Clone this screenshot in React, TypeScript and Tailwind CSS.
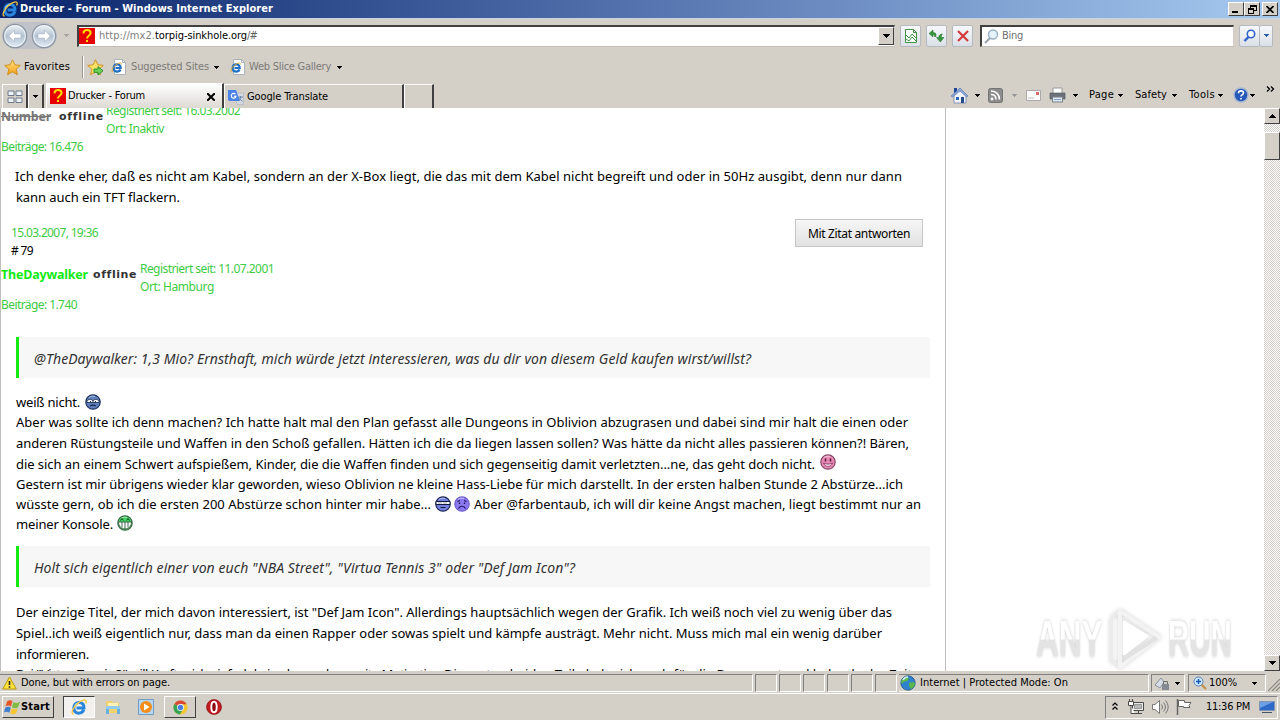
import React, { useLayoutEffect, useRef, useState } from "react";
import { clsx } from "clsx";

interface FitProps {
  w: number;
  children: string;
  className?: string;
}

// Text run that spreads its letters over a fixed width
function Fit({ w, children, className }: FitProps) {
  const ref = useRef<HTMLSpanElement>(null);
  const [spacing, setSpacing] = useState(0);

  useLayoutEffect(() => {
    if (!ref.current) return;
    const natural = ref.current.getBoundingClientRect().width;
    setSpacing((w - natural) / children.length);
  }, []);

  return (
    <span className={clsx("block shrink-0 whitespace-pre", className)} style={{ width: w }}>
      <span ref={ref} style={{ letterSpacing: spacing }}>
        {children}
      </span>
    </span>
  );
}

function Arrow({ className }: { className?: string }) {
  return (
    <svg width="5" height="3" viewBox="0 0 5 3" shapeRendering="crispEdges" className={clsx("shrink-0", className)}>
      <path d="M0 0h5v1H4v1H3v1H2V2H1V1H0z" fill="currentColor" />
    </svg>
  );
}

function IELogo({ size = 16, className }: { size?: number; className?: string }) {
  return (
    <svg width={size} height={size} viewBox="0 0 16 16" fill="none" className={clsx("shrink-0", className)}>
      <path d="M12.800 10.800C12 13 10 14.200 7.800 14.200 4.600 14.200 2.800 12 2.800 9s2-5.600 5.200-5.600c3.400 0 5.200 2.400 5 5.600H5.500" stroke="#2a86dc" strokeWidth="3" />
      <path d="M3.400 8C4.200 5.400 5.800 4 8 3.900" stroke="#a8deff" strokeWidth="1.200" />
      <path d="M2.600 15.200C-.8 14.500 2 8.600 6.500 4.600 10.300 1.200 15.200-.6 15.200 2.400c0 .7-.2 1.300-.5 2" stroke="#f6c63a" strokeWidth="1.300" />
    </svg>
  );
}

function IEPage({ className }: { className?: string }) {
  return (
    <svg width="16" height="16" viewBox="0 0 16 16" fill="none" className={clsx("shrink-0", className)}>
      <path d="M3.500.5h8l3 3v12h-11z" fill="#fff" stroke="#a9b3bd" />
      <path d="M11.500.5v3h3" stroke="#a9b3bd" />
      <path d="M9.500 10.500C8.900 12 7.700 12.600 6.300 12.600 4 12.600 2.700 11 2.700 9s1.300-3.600 3.600-3.600S9.800 7 9.700 9H4.500" stroke="#1f6fc4" strokeWidth="2.200" />
      <path d="M2 13.200C-.5 12.500 2 8 5 5.800c2.700-2 5.800-2.700 5.500-.4" stroke="#e2a81e" strokeWidth=".9" />
    </svg>
  );
}

function Star({ add, className }: { add?: boolean; className?: string }) {
  return (
    <svg width="17" height="17" viewBox="0 0 17 17" className={clsx("shrink-0", className)}>
      <defs>
        <linearGradient id="gold" x1="0" y1="0" x2="0" y2="1">
          <stop offset="0" stopColor="#ffe98a" />
          <stop offset="1" stopColor="#f39a12" />
        </linearGradient>
      </defs>
      <path d="M8.500.8l2.300 5 5.500.6-4.100 3.700 1.200 5.600-4.900-2.900-4.900 2.900L4.800 10.100.7 6.400l5.500-.6z" fill={add ? "#fbe36a" : "url(#gold)"} stroke="#cf8a12" strokeWidth=".9" />
      {add && <path d="M7 10h4V7.500l5 4.300-5 4.200v-2.700H7z" fill="#6fd35b" stroke="#1f8a24" strokeWidth=".9" />}
    </svg>
  );
}

function QuestionIcon({ className }: { className?: string }) {
  return (
    <span className={clsx("flex h-4 w-4 shrink-0 items-center justify-center bg-[#e60000]", className)}>
      <svg width="16" height="16" viewBox="0 0 16 16" fill="none">
        <path d="M4.500 5.500C4.500 3 6 2 8 2s3.600 1 3.600 3C11.600 7.400 8 7.600 8 10.600" stroke="#ffe100" strokeWidth="2" />
        <path d="M7 12h2v2H7z" fill="#ffe100" />
      </svg>
    </span>
  );
}

function NavButton({ flip }: { flip?: boolean }) {
  return (
    <svg width="26" height="26" viewBox="0 0 26 26" fill="none" className={clsx("shrink-0", flip && "-scale-x-100")}>
      <defs>
        <linearGradient id="nav" x1="0" y1="0" x2="0" y2="1">
          <stop offset="0" stopColor="#f2f5f8" />
          <stop offset=".5" stopColor="#b4c3d3" />
          <stop offset="1" stopColor="#e4eef6" />
        </linearGradient>
      </defs>
      <circle cx="13" cy="13" r="11.700" fill="url(#nav)" stroke="#8b95a1" strokeWidth="1.200" />
      <circle cx="13" cy="13" r="10.300" stroke="#eef3f8" />
      <path d="M12.500 7L6.700 13l5.800 6v-3.800H19v-4.400h-6.500z" fill="#fff" stroke="#a3b2c3" strokeWidth=".7" />
    </svg>
  );
}

const raised = "border border-t-white border-l-white border-r-[#404040] border-b-[#404040] bg-[#d4d0c8]";
const sunken = "border border-t-[#808080] border-l-[#808080] border-r-white border-b-white";
const toolButton = "flex h-[22px] items-center justify-center rounded-[2px] border border-[#b5bac0] bg-linear-to-b from-[#f7f8fa] to-[#dbe0e8]";

function TitleBar() {
  return (
    <div className="flex h-[18px] items-center bg-linear-to-r from-[#0a246a] via-[#5573ae] to-[#a6caf0] pr-[2px] pl-[2px]">
      <IELogo size={16} />
      <Fit w={253} className="ml-[2px] text-[11px] leading-[18px] font-bold text-white">
        Drucker - Forum - Windows Internet Explorer
      </Fit>
      <div className="ml-auto flex">
        <span className={clsx(raised, "flex h-[14px] w-4 items-end justify-center pb-[2px]")}>
          <i className="mr-[2px] h-[2px] w-[6px] bg-black" />
        </span>
        <span className={clsx(raised, "flex h-[14px] w-4 items-center justify-center")}>
          <svg width="9" height="9" viewBox="0 0 9 9" fill="none" stroke="#000" shapeRendering="crispEdges">
            <path d="M2.500 3V.5h6v5H6M2 1h7" />
            <path d="M.5 3.500h5v5h-5zM0 4h6" />
          </svg>
        </span>
        <span className={clsx(raised, "ml-[2px] flex h-[14px] w-4 items-center justify-center")}>
          <svg width="8" height="7" viewBox="0 0 8 7" stroke="#000" strokeWidth="1.700">
            <path d="M.5 0l7 7M7.500 0l-7 7" />
          </svg>
        </span>
      </div>
    </div>
  );
}

function AddressRow() {
  return (
    <div className="flex h-[34px] items-center border-t border-[#c6d3e4]">
      <div className="ml-[2px] flex h-[27px] w-[55px] items-center justify-between rounded-full bg-[#bfc3c9]">
        <NavButton />
        <NavButton flip />
      </div>
      <Arrow className="ml-[6px] w-[7px] text-[#a8a49d]" />
      <div className="ml-[7px] flex h-[22px] w-[818px] items-center border-t-2 border-r border-b border-l-2 border-t-[#404040] border-r-[#d4d0c8] border-b-[#c0bdb6] border-l-[#404040] bg-white">
        <QuestionIcon />
        <div className="ml-[4px] flex text-[11px]">
          <Fit w={56} className="text-[#808080]">http://mx2.</Fit>
          <Fit w={92} className="text-black">torpig-sinkhole.org</Fit>
          <Fit w={10} className="text-[#606060]">/#</Fit>
        </div>
        <span className={clsx(raised, "ml-auto flex h-[18px] w-[16px] items-center justify-center")}>
          <svg width="7" height="4" viewBox="0 0 7 4" shapeRendering="crispEdges">
            <path d="M0 0h7v1H6v1H5v1H4v1H3V3H2V2H1V1H0z" />
          </svg>
        </span>
      </div>
      <span className={clsx(toolButton, "ml-[5px] w-[21px]")}>
        <svg width="14" height="14" viewBox="0 0 14 14" fill="none" stroke="#3c9440">
          <path d="M1.500.5h8l3 3v10h-11z" fill="#fff" />
          <path d="M9.500.5v3h3M2 6l3 3 3-4 4 4M2 10l3 2 3-4 4 4" />
        </svg>
      </span>
      <span className={clsx(toolButton, "ml-[5px] w-[21px]")}>
        <svg width="15" height="14" viewBox="0 0 15 14" fill="#36983c" stroke="#1b6d24" strokeWidth=".5">
          <path d="M0 4.500L4 1v2.500c2 0 3 .8 3 2.500v1.500H5.500C5.500 6 5 5.500 4 5.500V8z" />
          <path d="M15 8.500L11.300 13 7.500 8.500h2.300C9.800 6.500 11 5 13.500 5c-1 .8-1.200 2-1.100 3.500z" />
        </svg>
      </span>
      <span className={clsx(toolButton, "ml-[5px] w-[21px]")}>
        <svg width="12" height="12" viewBox="0 0 12 12" stroke="#d43c3c" strokeWidth="2.200">
          <path d="M1 1l10 10M11 1L1 11" />
        </svg>
      </span>
      <div className="ml-[7px] flex h-[22px] w-[254px] items-center border-t-2 border-r border-b border-l-2 border-t-[#404040] border-r-[#d4d0c8] border-b-[#c0bdb6] border-l-[#404040] bg-white pl-[2px]">
        <svg width="15" height="15" viewBox="0 0 15 15" fill="none">
          <path d="M6 9l-5 5" stroke="#9aa5b0" strokeWidth="2.200" />
          <circle cx="9" cy="5.500" r="4.500" fill="#e6f3fc" stroke="#9ab0c4" strokeWidth="1.400" />
        </svg>
        <Fit w={21} className="ml-[3px] pt-[1px] text-[11px] text-[#707070]">Bing</Fit>
      </div>
      <span className={clsx(toolButton, "ml-[5px] w-[21px]")}>
        <svg width="13" height="13" viewBox="0 0 13 13" fill="none">
          <path d="M6 7.500l-4.500 4.500" stroke="#2c62c9" strokeWidth="2.400" />
          <circle cx="8" cy="5" r="3.700" fill="#fff" stroke="#2c62c9" strokeWidth="1.600" />
        </svg>
      </span>
      <span className={clsx(toolButton, "w-[13px] border-l-0")}>
        <Arrow className="text-[#2c5ea8]" />
      </span>
    </div>
  );
}

function FavoritesRow() {
  return (
    <div className="flex h-[30px] items-center text-[11px] text-[#7c7a76]">
      <Star className="ml-[4px]" />
      <Fit w={46} className="ml-[3px] text-black">Favorites</Fit>
      <span className="ml-[12px] h-[22px] w-[2px] border-r border-l border-r-white border-l-[#9a968f]" />
      <Star add className="ml-[3px]" />
      <IEPage className="ml-[7px]" />
      <Fit w={78} className="ml-[4px] pt-[1px]">Suggested Sites</Fit>
      <Arrow className="ml-[5px] text-black" />
      <IEPage className="ml-[11px]" />
      <Fit w={82} className="ml-[3px] pt-[1px]">Web Slice Gallery</Fit>
      <Arrow className="ml-[6px] text-black" />
    </div>
  );
}

const tabEdge = "flex items-center border-t border-r-2 border-l border-t-white border-r-[#404040] border-l-white";

function TabRow() {
  return (
    <div className="flex h-[26px] items-end text-[11px]">
      <div className={clsx(tabEdge, "ml-[2px] h-6 w-[26px] justify-center")}>
        <svg width="16" height="14" viewBox="0 0 16 14" fill="#eef1f5" stroke="#6c7a8c">
          <path d="M1 1h6v4.500H1zM9 1h6v4.500H9zM1 8h6v4.500H1zM9 8h6v4.500H9z" />
        </svg>
      </div>
      <div className={clsx(tabEdge, "h-6 w-4 justify-center")}>
        <Arrow />
      </div>
      <div className={clsx(tabEdge, "ml-[2px] h-[25px] w-[178px] bg-linear-to-b from-white to-[#dedad4] pl-[3px]")}>
        <QuestionIcon />
        <Fit w={77} className="ml-[2px] pt-[1px]">Drucker - Forum</Fit>
        <svg width="8" height="8" viewBox="0 0 8 8" stroke="#000" strokeWidth="2" className="mt-[2px] mr-[7px] ml-auto">
          <path d="M0 0l8 8M8 0L0 8" />
        </svg>
      </div>
      <div className={clsx(tabEdge, "h-6 w-[180px] pl-[3px]")}>
        <svg width="16" height="16" viewBox="0 0 16 16">
          <path d="M6 4h9.500v11.500H9z" fill="#d5d9df" stroke="#aab0b8" strokeWidth=".6" />
          <path d="M0 1h8l4 11H1.500L0 11z" fill="#4a83e8" />
          <path d="M7.500 5.200A2.400 2.400 0 1 0 8 7.300H5.800" fill="none" stroke="#fff" strokeWidth="1.100" />
          <path d="M10 8h5M12.500 7v1c0 2-1 3-2.500 4M11.500 9.500l3 3" fill="none" stroke="#5b7fae" strokeWidth=".9" />
        </svg>
        <Fit w={81} className="ml-[3px] pt-[2px]">Google Translate</Fit>
      </div>
      <div className={clsx(tabEdge, "h-6 w-[30px]")} />

      <div className="ml-[517px] flex h-[26px] items-center">
        <svg width="17" height="17" viewBox="0 0 17 17">
          <path d="M3 1h3v5H3z" fill="#23479c" />
          <path d="M3 8l6-6 6 6v8H3z" fill="#f1f5fb" stroke="#7187ab" strokeWidth=".8" />
          <path d="M0 9l9-8 8 8-1.500 1L9 4 1.500 10z" fill="#8ca8d8" stroke="#4563a0" strokeWidth=".5" />
          <path d="M5 10h3v3H5z" fill="#2c67b8" />
          <path d="M10 10h3v6h-3z" fill="#234a86" />
        </svg>
        <Arrow className="ml-[7px]" />
        <svg width="15" height="15" viewBox="0 0 15 15" fill="none" className="ml-[8px]">
          <rect x=".5" y=".5" width="14" height="14" rx="2" fill="#8c8c8c" stroke="#737373" />
          <circle cx="4" cy="11" r="1.400" fill="#fff" />
          <path d="M3 6.500c3 0 5 2 5 5M3 3c5 0 8.500 3.500 8.500 8.500" stroke="#fff" strokeWidth="1.500" />
        </svg>
        <Arrow className="ml-[9px] text-[#999]" />
        <svg width="15" height="11" viewBox="0 0 15 11" fill="none" className="ml-[9px]">
          <path d="M.5.5h14v10H.5z" fill="#fafafa" stroke="#a9a9a9" />
          <path d="M10 2h3v3h-3z" fill="#d86a6a" />
          <path d="M2 8h6" stroke="#c0c0c0" />
        </svg>
        <svg width="17" height="16" viewBox="0 0 17 16" className="ml-[8px]">
          <path d="M4 1h9v6H4z" fill="#fff" stroke="#999" />
          <path d="M1 6h15v6H1z" fill="#6b727b" stroke="#4b5159" strokeWidth=".6" />
          <path d="M3.500 10h10v5h-10z" fill="#dfe6ee" stroke="#7a8088" />
          <path d="M5 12.500h7" stroke="#7da4cf" />
        </svg>
        <Arrow className="ml-[7px]" />
        <Fit w={25} className="ml-[11px]">Page</Fit>
        <Arrow className="ml-[4px]" />
        <Fit w={32} className="ml-[12px]">Safety</Fit>
        <Arrow className="ml-[5px]" />
        <Fit w={26} className="ml-[12px]">Tools</Fit>
        <Arrow className="ml-[3px]" />
        <svg width="16" height="16" viewBox="0 0 16 16" fill="none" className="ml-[10px]">
          <circle cx="8" cy="8" r="7" fill="#2459b9" stroke="#a7b6d1" strokeWidth="1.500" />
          <path d="M5.500 6.300c0-1.600 1-2.400 2.500-2.400s2.500.8 2.500 2.100C10.500 7.600 8 7.700 8 9.600M8 11v1.600" stroke="#fff" strokeWidth="1.600" />
        </svg>
        <Arrow className="ml-[1px]" />
        <svg width="9" height="6" viewBox="0 0 9 6" fill="none" stroke="#000" strokeWidth="1.300" className="mb-[13px] ml-[11px]">
          <path d="M1 .5L3.500 3 1 5.500M5 .5L7.500 3 5 5.500" />
        </svg>
      </div>
    </div>
  );
}

type Mood = "tired" | "happy" | "cool" | "sad" | "grin";

const moodFill: Record<Mood, string> = {
  tired: "#5f80bb",
  happy: "#e58ab4",
  cool: "#737fdc",
  sad: "#8a78ee",
  grin: "#46d466",
};

const moodEdge: Record<Mood, string> = {
  tired: "#1a2f5b",
  happy: "#8a4568",
  cool: "#1b2450",
  sad: "#6f5ecb",
  grin: "#3b6b47",
};

function Smiley({ mood, className }: { mood: Mood; className?: string }) {
  return (
    <svg width="16" height="16" viewBox="0 0 16 16" fill="none" className={clsx("shrink-0", className)}>
      <circle cx="8" cy="8" r="7.200" fill={moodFill[mood]} stroke={moodEdge[mood]} strokeWidth="1.200" />
      <path d="M4 3.500C5.500 2 8 1.800 10 2.500" stroke="#fff" strokeOpacity=".55" />
      {mood === "tired" && (
        <>
          <path d="M2 7.500C2.500 5 7 5 7.500 6.500h1C9 5 13.500 5 14 7.500v1H2z" fill="#fff" stroke="#14244a" strokeWidth=".8" />
          <path d="M5.500 7v1.500M10.500 7v1.500M8 6.500v2" stroke="#14244a" strokeWidth=".9" />
          <path d="M5 12.200c1.500-1.500 4.500-1.500 6 0" stroke="#14244a" strokeWidth="1.100" />
        </>
      )}
      {mood === "happy" && (
        <>
          <path d="M5.500 4.500v3M10.500 4.500v3" stroke="#4d1231" strokeWidth="1.400" />
          <path d="M3.500 9c1.500 4.500 7.500 4.500 9 0-2.500 1.500-6.500 1.500-9 0z" fill="#fff" stroke="#7d1f50" strokeWidth=".8" />
        </>
      )}
      {mood === "cool" && (
        <>
          <path d="M1 5.500h14v3H1z" fill="#fff" stroke="#101a40" />
          <path d="M3 7h10" stroke="#101a40" strokeOpacity=".4" strokeDasharray="4 1" />
          <path d="M5.500 11.500h5" stroke="#101a40" />
        </>
      )}
      {mood === "sad" && (
        <>
          <path d="M3.500 5.500l2.500-1M12.500 5.500l-2.500-1M5.500 6.500v1.500M10.500 6.500v1.500" stroke="#1c1259" strokeWidth="1.300" />
          <path d="M4.500 12.500c1.500-3 5.500-3 7 0" stroke="#1c1259" strokeWidth="1.200" />
        </>
      )}
      {mood === "grin" && (
        <>
          <path d="M3.500 5.500l1.500-2 1.500 2M9.500 5.500l1.500-2 1.500 2" stroke="#0d4a1b" />
          <path d="M1.500 7h13c0 4-2.500 7-6.500 7s-6.500-3-6.500-7z" fill="#fff" stroke="#2c5a38" strokeWidth=".9" />
          <path d="M5 7v5.500M8 7v7M11 7v5.500" stroke="#2c5a38" strokeWidth=".9" />
        </>
      )}
    </svg>
  );
}

function Line({ className, children }: { className: string; children: React.ReactNode }) {
  return <div className={clsx("flex shrink-0 items-center", className)}>{children}</div>;
}

function Quote({ w, children }: { w: number; children: string }) {
  return (
    <div className="ml-[15px] flex h-[41px] w-[914px] shrink-0 items-center border-l-[3px] border-[#12ea12] bg-[#f7f7f7] pt-[1px] pl-[15px] text-[14px] text-[#333] italic">
      <Fit w={w}>{children}</Fit>
    </div>
  );
}

const meta = "text-[12px] text-[#3ecb45]";

function ForumPage() {
  return (
    <div className="flex h-full w-[946px] flex-col overflow-hidden border-r border-l border-[#bdbdbd] font-['Noto_Sans','Open_Sans',sans-serif] text-[13px] text-black">
      <div className="flex h-[30px] shrink-0">
        <Fit w={50} className="text-[12.5px] leading-[17px] font-bold text-[#777] line-through">Number</Fit>
        <Fit w={44} className="ml-[8px] font-['DejaVu_Sans',sans-serif] text-[11px] leading-[17px] font-bold text-[#333]">offline</Fit>
        <div className={clsx(meta, "-mt-[6px] ml-[3px] leading-[18px]")}>
          <Fit w={134}>Registriert seit: 16.03.2002</Fit>
          <Fit w={58}>Ort: Inaktiv</Fit>
        </div>
      </div>
      <Line className={clsx(meta, "h-[18px]")}><Fit w={82}>Beiträge: 16.476</Fit></Line>
      <Line className="mt-[10px] h-[21px] pl-[14px]">
        <Fit w={887}>Ich denke eher, daß es nicht am Kabel, sondern an der X-Box liegt, die das mit dem Kabel nicht begreift und oder in 50Hz ausgibt, denn nur dann</Fit>
      </Line>
      <Line className="h-[21px] pl-[15px]"><Fit w={164}>kann auch ein TFT flackern.</Fit></Line>
      <div className="mt-[11px] flex h-[48px] shrink-0 justify-between pr-[22px] pl-[10px]">
        <div className="pt-[5px] leading-[18px]">
          <Fit w={87} className={meta}>15.03.2007, 19:36</Fit>
          <Fit w={22} className="text-[12px]"># 79</Fit>
        </div>
        <div className="flex h-7 w-32 items-center justify-center border border-[#c6c6c6] bg-linear-to-b from-[#f6f6f6] to-[#e2e2e2] pt-[2px] text-[12px]">
          <Fit w={102}>Mit Zitat antworten</Fit>
        </div>
      </div>
      <div className="-mt-[7px] flex h-[36px] shrink-0">
        <Fit w={87} className="pt-[6px] text-[12.5px] leading-[18px] font-bold text-[#12ea12]">TheDaywalker</Fit>
        <Fit w={43} className="ml-[5px] pt-[6px] font-['DejaVu_Sans',sans-serif] text-[11px] leading-[18px] font-bold text-[#333]">offline</Fit>
        <div className={clsx(meta, "ml-[4px] leading-[18px]")}>
          <Fit w={134}>Registriert seit: 11.07.2001</Fit>
          <Fit w={74}>Ort: Hamburg</Fit>
        </div>
      </div>
      <Line className={clsx(meta, "h-[18px]")}><Fit w={76}>Beiträge: 1.740</Fit></Line>
      <div className="h-[23px] shrink-0" />
      <Quote w={717}>@TheDaywalker: 1,3 Mio? Ernsthaft, mich würde jetzt interessieren, was du dir von diesem Geld kaufen wirst/willst?</Quote>
      <div className="h-[15px] shrink-0" />
      <Line className="h-[20px] pl-[15px]">
        <Fit w={64}>weiß nicht.</Fit>
        <Smiley mood="tired" className="mb-[2px] ml-[5px]" />
      </Line>
      <Line className="h-[20px] pl-[15px]">
        <Fit w={892}>Aber was sollte ich denn machen? Ich hatte halt mal den Plan gefasst alle Dungeons in Oblivion abzugrasen und dabei sind mir halt die einen oder</Fit>
      </Line>
      <Line className="h-[21px] pl-[15px]">
        <Fit w={893}>anderen Rüstungsteile und Waffen in den Schoß gefallen. Hätten ich die da liegen lassen sollen? Was hätte da nicht alles passieren können?! Bären,</Fit>
      </Line>
      <Line className="h-[21px] pl-[15px]">
        <Fit w={799}>die sich an einem Schwert aufspießem, Kinder, die die Waffen finden und sich gegenseitig damit verletzten...ne, das geht doch nicht.</Fit>
        <Smiley mood="happy" className="mb-[6px] ml-[5px]" />
      </Line>
      <Line className="h-[20px] pl-[15px]">
        <Fit w={887}>Gestern ist mir übrigens wieder klar geworden, wieso Oblivion ne kleine Hass-Liebe für mich darstellt. In der ersten halben Stunde 2 Abstürze...ich</Fit>
      </Line>
      <Line className="h-[20px] pl-[15px]">
        <Fit w={415}>wüsste gern, ob ich die ersten 200 Abstürze schon hinter mir habe...</Fit>
        <Smiley mood="cool" className="mb-[2px] ml-[4px]" />
        <Smiley mood="sad" className="mb-[3px] ml-[3px]" />
        <Fit w={447} className="ml-[4px]">Aber @farbentaub, ich will dir keine Angst machen, liegt bestimmt nur an</Fit>
      </Line>
      <Line className="h-[19px] pl-[15px]">
        <Fit w={97}>meiner Konsole.</Fit>
        <Smiley mood="grin" className="mb-[4px] ml-[4px]" />
      </Line>
      <div className="h-[12px] shrink-0" />
      <Quote w={541}>Holt sich eigentlich einer von euch "NBA Street", "Virtua Tennis 3" oder "Def Jam Icon"?</Quote>
      <div className="h-[15px] shrink-0" />
      <Line className="h-[21px] pl-[15px]">
        <Fit w={876}>Der einzige Titel, der mich davon interessiert, ist "Def Jam Icon". Allerdings hauptsächlich wegen der Grafik. Ich weiß noch viel zu wenig über das</Fit>
      </Line>
      <Line className="h-[21px] pl-[15px]">
        <Fit w={866}>Spiel..ich weiß eigentlich nur, dass man da einen Rapper oder sowas spielt und kämpfe austrägt. Mehr nicht. Muss mich mal ein wenig darüber</Fit>
      </Line>
      <Line className="h-[21px] pl-[15px]"><Fit w={73}>informieren.</Fit></Line>
      <Line className="h-[19px] pl-[15px]">
        <Fit w={428}>Bei "Virtua Tennis 3" will Kraft mich einfach keine besonders weite Motivation.</Fit>
        <Fit w={468}>Die ersten beiden Teile habe ich auch für die Dreamcast und habe da der Zeit</Fit>
      </Line>
    </div>
  );
}

function Scrollbar() {
  const cap = clsx(raised, "flex h-4 w-4 shrink-0 items-center justify-center");
  return (
    <div className="ml-auto flex w-4 flex-col bg-[repeating-conic-gradient(#ffffff_0_25%,#d4d0c8_0_50%)] bg-size-[2px_2px]">
      <span className={cap}>
        <svg width="7" height="4" viewBox="0 0 7 4" shapeRendering="crispEdges">
          <path d="M3 0h1v1h1v1h1v1h1v1H0V3h1V2h1V1h1z" />
        </svg>
      </span>
      <span className={clsx(raised, "mt-[8px] h-7 w-4")} />
      <span className={clsx(cap, "mt-auto")}>
        <svg width="7" height="4" viewBox="0 0 7 4" shapeRendering="crispEdges">
          <path d="M0 0h7v1H6v1H5v1H4v1H3V3H2V2H1V1H0z" />
        </svg>
      </span>
    </div>
  );
}

function Watermark() {
  const word =
    "block origin-left bg-linear-to-b from-white from-50% to-[#e4e4e4] to-52% bg-clip-text font-['Liberation_Sans',sans-serif] text-[50px] leading-[56px] font-bold text-transparent drop-shadow-[0_0_2px_rgba(0,0,0,0.22)]";
  return (
    <div className="absolute right-[48px] bottom-0 flex h-[64px] items-center">
      <div className="w-[67px]">
        <span className={clsx(word, "w-[107px] scale-x-[0.63]")}>ANY</span>
      </div>
      <svg width="58" height="64" viewBox="0 0 58 64" fill="none" strokeLinejoin="round" className="mr-[4px] ml-[3px] drop-shadow-[0_0_2px_rgba(0,0,0,0.18)]">
        <path d="M5 12v42l10 6M14 4L5 11" stroke="#ebebeb" strokeWidth="3" />
        <path d="M14 4L53 30 14 60z" stroke="#f3f3f3" strokeWidth="4" />
        <path d="M18 15l23 14-23 18z" fill="#fff" stroke="#fff" strokeWidth="3" />
        <path d="M17 52l34-21" stroke="#e2e2e2" strokeWidth="4" />
      </svg>
      <div className="w-[64px]">
        <span className={clsx(word, "w-[109px] scale-x-[0.59]")}>RUN</span>
      </div>
    </div>
  );
}

function StatusBar() {
  return (
    <div className="flex h-[22px] shrink-0 items-start bg-[#d4d0c8] pt-[3px] text-[11px]">
      <div className={clsx(sunken, "flex h-[18px] w-[753px] items-center border-l-0 pl-[2px]")}>
        <svg width="15" height="14" viewBox="0 0 15 14">
          <path d="M7.500 1l6.800 12H.7z" fill="#ffe23a" stroke="#b99711" />
          <path d="M6.700 5h1.600v4H6.700zM6.700 10.300h1.600v1.500H6.700z" fill="#222" />
        </svg>
        <Fit w={149} className="ml-[4px] pt-[1px]">Done, but with errors on page.</Fit>
      </div>
      {[0, 1, 2, 3, 4, 5].map((i) => (
        <div key={i} className={clsx(sunken, "ml-[2px] h-[18px] w-[22px]")} />
      ))}
      <div className={clsx(sunken, "ml-[2px] flex h-[18px] w-[250px] items-center border-l-0")}>
        <svg width="16" height="16" viewBox="0 0 16 16" className="ml-[1px]">
          <circle cx="8" cy="8" r="7.200" fill="#2f82cf" stroke="#215181" strokeWidth=".8" />
          <path d="M3 3c3-2 5-1.500 6 0L7.500 6l-4 1L2 9 1 7zM9 8l4-1 2 1c0 3-2 5-4 6l-2-3z" fill="#59b848" />
          <path d="M3 5c1-2 3-3 5-3" stroke="#d0efff" strokeWidth="1.500" fill="none" />
        </svg>
        <Fit w={148} className="ml-[4px] pt-[1px]">Internet | Protected Mode: On</Fit>
      </div>
      <div className={clsx(sunken, "ml-[2px] flex h-[18px] w-[34px] items-center")}>
        <svg width="17" height="15" viewBox="0 0 17 15" className="ml-[2px]">
          <path d="M1 9l6-7 3 4-4 6z" fill="#d6dde6" stroke="#8b929b" />
          <rect x="8" y="8" width="7" height="6" fill="#858b92" />
          <path d="M9.500 8V5.500h4V8" fill="none" stroke="#6a6f75" />
        </svg>
        <Arrow className="ml-[4px]" />
      </div>
      <div className={clsx(sunken, "ml-[3px] flex h-[18px] w-[78px] items-center")}>
        <svg width="14" height="14" viewBox="0 0 14 14" fill="none" className="ml-[4px]">
          <path d="M8 8l5 5" stroke="#c39147" strokeWidth="2.200" />
          <circle cx="5.500" cy="5.500" r="4.500" fill="#cce7fb" stroke="#5680b8" />
          <path d="M5.500 3v5M3 5.500h5" stroke="#1759b6" strokeWidth="1.500" />
        </svg>
        <Fit w={28} className="ml-[2px] pt-[1px]">100%</Fit>
        <Arrow className="ml-[15px]" />
      </div>
      <svg width="12" height="12" viewBox="0 0 12 12" stroke="#8a867e" strokeWidth="1.200" className="mt-[5px] ml-auto">
        <path d="M0 12L12 0M4 12l8-8M8 12l4-4" />
      </svg>
    </div>
  );
}

function Taskbar() {
  return (
    <div className="flex h-[27px] shrink-0 items-center border-t border-white bg-[#d4d0c8] text-[11px]">
      <div className={clsx(raised, "ml-[2px] flex h-[22px] w-[52px] items-center")}>
        <svg width="17" height="16" viewBox="0 0 17 16" className="ml-[1px]">
          <path d="M3 2.500c2-1.500 4-1.500 5.500-.3L7 7.500C5 6 3.500 6 1.500 7.500z" fill="#e8562a" />
          <path d="M9.500 3c2 1.300 4 1.200 6.500-.2l-2 5.400c-2 1.300-4 1.300-6 0z" fill="#7fbb42" />
          <path d="M1.200 8.800c2-1.500 4-1.500 5.600-.2l-1.500 5.200c-2-1.500-3.500-1.300-5.300-.2z" fill="#3e7fd0" />
          <path d="M7.700 9.300c2 1.400 4 1.200 6 0l-1.600 5.200c-2 1.200-4 1-6-.2z" fill="#f7c531" />
        </svg>
        <Fit w={29} className="font-bold">Start</Fit>
      </div>
      <div className="ml-[9px] flex h-[22px] w-8 items-center justify-center border border-t-[#404040] border-r-white border-b-white border-l-[#404040] bg-[#f3f1ee]">
        <IELogo />
      </div>
      <svg width="16" height="16" viewBox="0 0 16 16" className="ml-[10px]">
        <path d="M1 2h6l1 1.500h6V14H1z" fill="#f1d36d" />
        <path d="M3 4h10v6H3z" fill="#fdf3b8" />
        <path d="M1 7h14v3H1z" fill="#91cbed" />
        <path d="M1 10h3v5H1zM12 10h3v5h-3z" fill="#6ab0de" />
      </svg>
      <svg width="16" height="16" viewBox="0 0 16 16" className="ml-[17px]">
        <path d="M.5.5h15v15H.5z" fill="#b6d6f1" stroke="#6d9cc9" />
        <circle cx="8" cy="8" r="6" fill="#f38c19" />
        <path d="M6 4.500l5.500 3.500L6 11.500z" fill="#fff" />
      </svg>
      <div className={clsx(raised, "ml-[10px] flex h-[22px] w-8 items-center justify-center")}>
        <svg width="15" height="15" viewBox="0 0 16 16">
          <circle cx="8" cy="8" r="7.500" fill="#f5c72f" />
          <path d="M8 8L1.500 4.200A7.500 7.500 0 0 1 14.500 4.500H8z" fill="#d94a3a" />
          <path d="M8 8l-6.500-3.800A7.500 7.500 0 0 0 7.200 15.500L11 9.500z" fill="#38a352" />
          <circle cx="8" cy="8" r="3.700" fill="#fff" />
          <circle cx="8" cy="8" r="2.900" fill="#4a7fe0" />
        </svg>
      </div>
      <svg width="16" height="16" viewBox="0 0 16 16" className="ml-[10px]">
        <circle cx="8" cy="8" r="7.500" fill="#c11a1f" stroke="#81090d" strokeWidth=".6" />
        <ellipse cx="8" cy="8" rx="2.700" ry="5.300" fill="#8d0b10" stroke="#fff" strokeWidth="1.900" />
      </svg>

      <div className={clsx(sunken, "mr-[2px] ml-auto flex h-[23px] w-[173px] items-center")}>
        <svg width="6" height="8" viewBox="0 0 6 8" fill="none" stroke="#000" strokeWidth="1.200" className="mb-[3px] ml-[6px]">
          <path d="M.5 3.500L3 1l2.500 2.500M.5 7.500L3 5l2.500 2.500" />
        </svg>
        <svg width="16" height="16" viewBox="0 0 16 16" fill="#e8e8e8" stroke="#4a4a4a" className="ml-[10px]">
          <path d="M4.500 3.500h11v8h-11zM7 14.500h7M10.500 11.500v3" />
          <path d="M6.500 5.500h7v4h-7z" fill="#b8b8b8" stroke="#999" />
          <path d="M.5 2.500h5v4h-5zM1.500 0v2M4.500 0v2M3 6.500v8h4" fill="#fff" />
        </svg>
        <svg width="17" height="16" viewBox="0 0 17 16" fill="none" stroke="#777" className="ml-[8px]">
          <path d="M.5 5.500H3L7.500 1.500v13L3 10.500H.5z" fill="#fff" />
          <path d="M9.500 5.500c1.200 1.500 1.200 3.500 0 5M11.500 3.500c2.500 3 2.500 6 0 9M13.500 1.500c3.500 4 3.500 9 0 13" />
        </svg>
        <svg width="16" height="16" viewBox="0 0 16 16" fill="#fff" stroke="#666" className="ml-[7px]">
          <path d="M1.500 0v16" strokeWidth="1.500" />
          <path d="M2.500 1.500h6v2H15l-2 3 1 2H7.500v-1h-5z" />
        </svg>
        <Fit w={44} className="ml-[14px] pt-[1px]">11:36 PM</Fit>
        <svg width="16" height="14" viewBox="0 0 16 14" className="ml-[9px]">
          <path d="M.5 1.500h15v9H.5z" fill="#2e6ac7" stroke="#8196b5" />
          <path d="M1 2l13 0-13 6z" fill="#6ea0e4" />
          <path d="M3 12h10v1H3z" fill="#44546a" />
        </svg>
      </div>
    </div>
  );
}

export default function App() {
  return (
    <div className="flex h-[720px] w-[1280px] flex-col overflow-hidden bg-[#d4d0c8] font-['DejaVu_Sans_Condensed','DejaVu_Sans',sans-serif] text-black">
      <TitleBar />
      <AddressRow />
      <FavoritesRow />
      <TabRow />
      <div className="relative flex h-[563px] shrink-0 bg-white">
        <ForumPage />
        <Watermark />
        <Scrollbar />
      </div>
      <StatusBar />
      <Taskbar />
    </div>
  );
}
